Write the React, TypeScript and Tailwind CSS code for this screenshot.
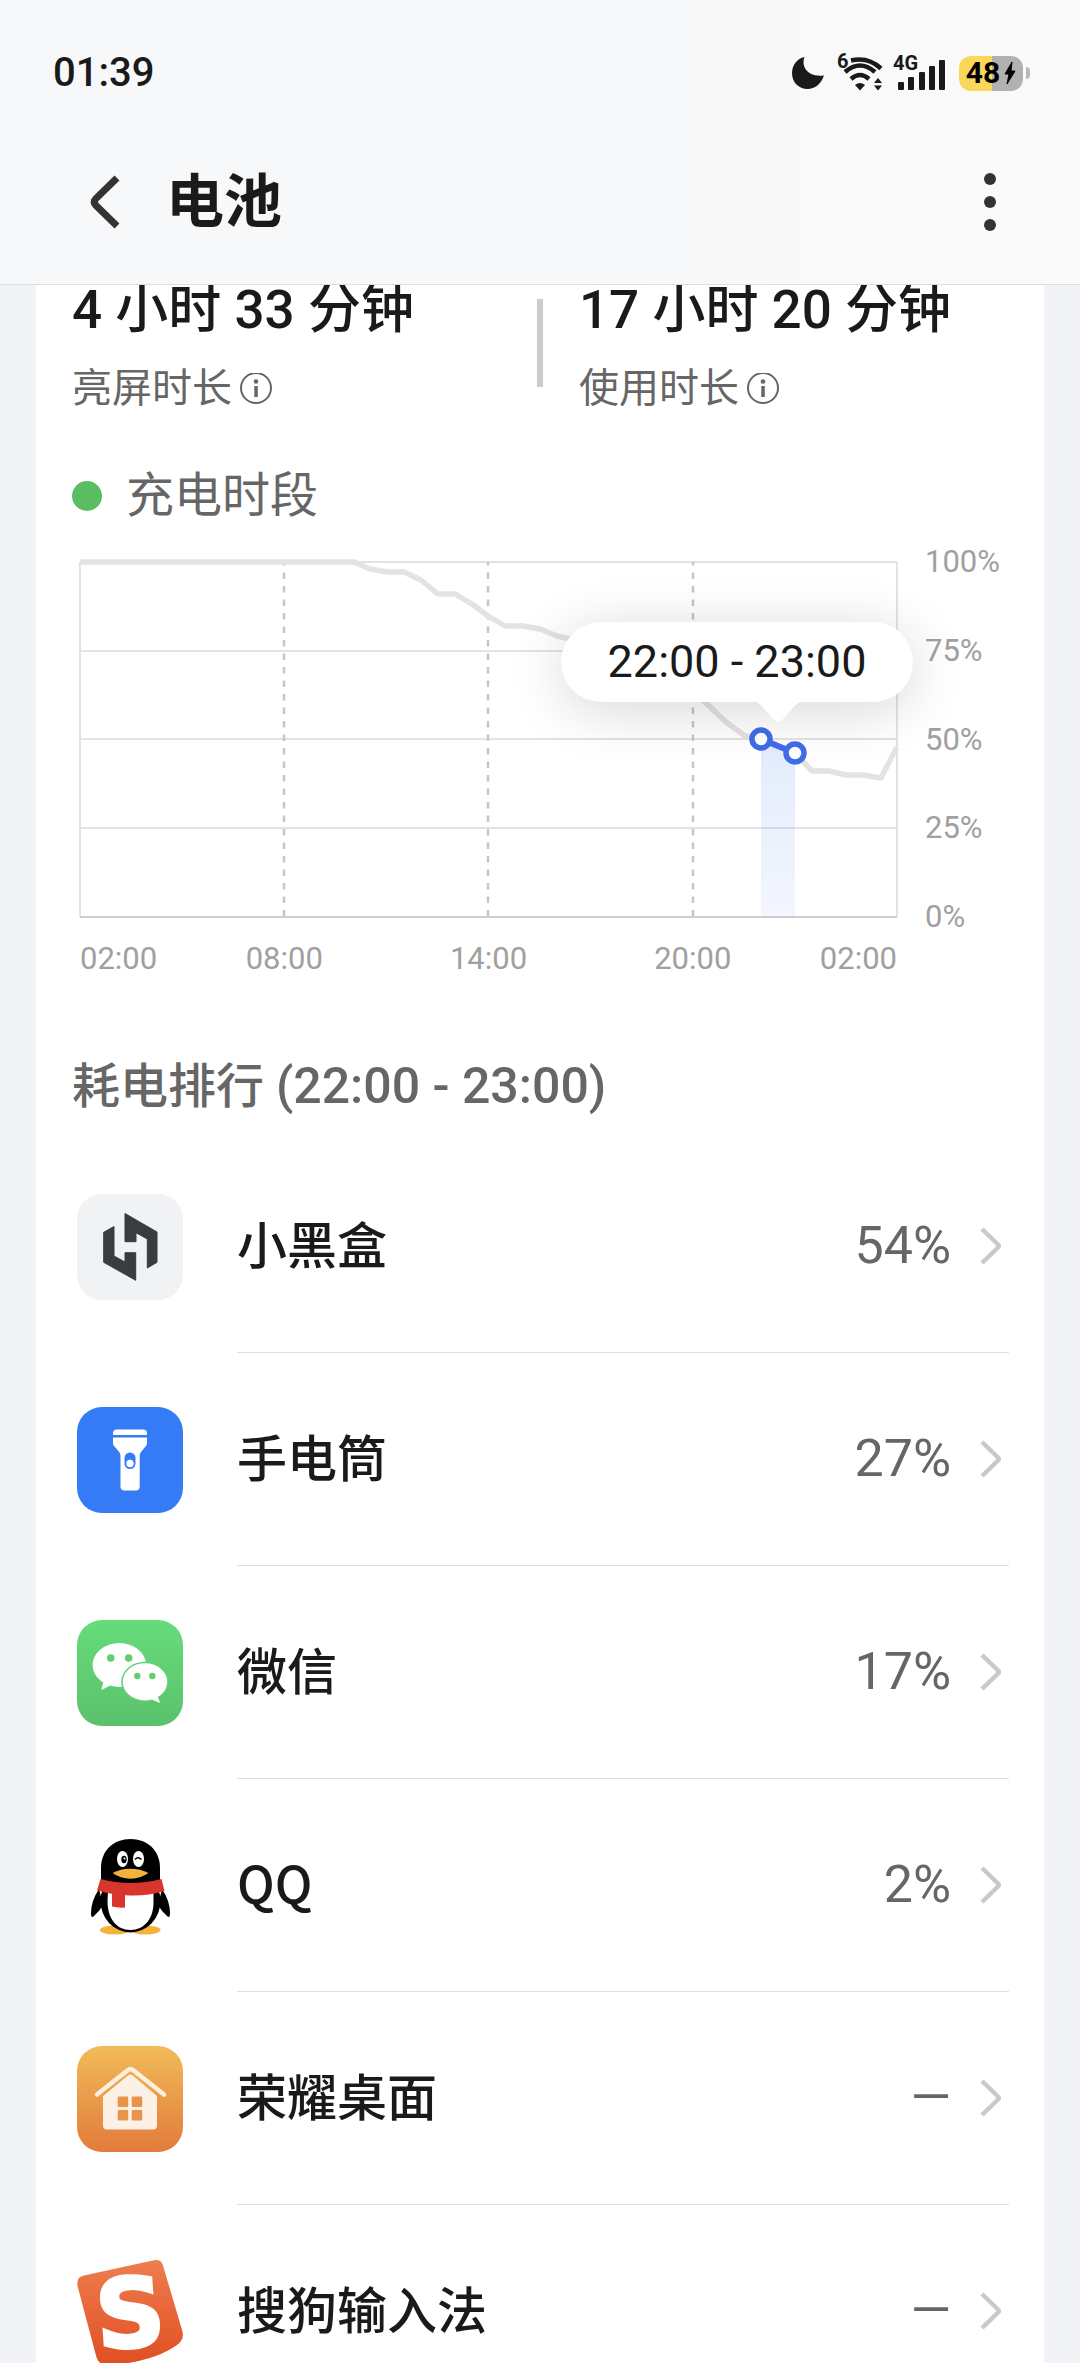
import React from "react";

const points = [
  [0, 0], [274, 0], [290, 7], [307, 10], [324, 10], [341, 18], [358, 32], [375, 32],
  [392, 42], [408, 54], [425, 64], [443, 64], [460, 67], [477, 74], [494, 78], [511, 84],
  [545, 98], [590, 120], [610, 128], [625, 140], [646, 160], [665, 174], [681, 177],
  [715, 191], [732, 209], [749, 209], [766, 213], [783, 213], [801, 216], [817, 185],
];

const linePath = points.map((p) => p.join(",")).join(" ");

function HeyboxIcon() {
  return (
    <svg viewBox="0 0 106 106" className="w-full h-full" aria-hidden="true">
      <rect width="106" height="106" rx="25" fill="#f1f2f4" />
      <g fill="#3a3c40" stroke="#3a3c40" strokeWidth="1" strokeLinejoin="round">
        <path d="M48 19.5 80 38v30.3l-9.700 5.700V45L59 38.700v9H48z" />
        <path d="M37 32.500 26.700 38.300v30l32 18V58.700H48V68l-11-6z" />
      </g>
    </svg>
  );
}

function TorchIcon() {
  return (
    <svg viewBox="0 0 106 106" className="w-full h-full" aria-hidden="true">
      <rect width="106" height="106" rx="25" fill="#357bf6" />
      <path d="M36 28v-1.500a4 4 0 0 1 4-4h26a4 4 0 0 1 4 4V28z" fill="#fff" />
      <path
        d="M36 30.500h34V36q0 2-1.500 3.500L64 45q-1.300 1.500-1.300 3.500V79.500a4 4 0 0 1-4 4H47.500a4 4 0 0 1-4-4V48.500q0-2-1.300-3.500L37.500 39.500Q36 38 36 36z"
        fill="#fff"
      />
      <rect x="47.500" y="45.500" width="11" height="16.500" rx="5.500" fill="#357bf6" />
      <circle cx="53" cy="56.500" r="3.700" fill="#fff" />
    </svg>
  );
}

function WechatIcon() {
  return (
    <svg viewBox="0 0 106 106" className="w-full h-full" aria-hidden="true">
      <defs>
        <linearGradient id="wechat" x1="0" y1="0" x2="0" y2="1">
          <stop offset="0" stopColor="#66dc7a" />
          <stop offset="1" stopColor="#5bc16c" />
        </linearGradient>
      </defs>
      <rect width="106" height="106" rx="25" fill="url(#wechat)" />
      <ellipse cx="42.300" cy="45" rx="26.700" ry="22" fill="#fff" />
      <path d="M27 60 24.500 69q0 1 1.200.6L34 65z" fill="#fff" />
      <ellipse cx="68" cy="61.800" rx="23.800" ry="20" fill="#60cf73" />
      <ellipse cx="68" cy="61.800" rx="22.300" ry="18.600" fill="#fff" />
      <path d="m80 75 2.800 6.800q0 1.200-1.200.7L74 79z" fill="#fff" />
      <g fill="#60cf73">
        <circle cx="33.700" cy="38" r="3.800" />
        <circle cx="51.700" cy="38" r="3.800" />
        <circle cx="60.300" cy="56" r="3.200" />
        <circle cx="75.300" cy="56" r="3.200" />
      </g>
    </svg>
  );
}

function QQIcon() {
  return (
    <svg viewBox="0 0 106 106" className="w-full h-full" aria-hidden="true">
      <ellipse cx="38" cy="97" rx="15" ry="4.500" fill="#f3b33b" />
      <ellipse cx="68.500" cy="97" rx="15" ry="4.500" fill="#f3b33b" />
      <path
        d="M22 56Q14 68 14 80q0 6 3 3 5-4 9-11zM85 56q8 12 8 24 0 6-3 3-5-4-9-11z"
        fill="#000"
      />
      <ellipse cx="53.500" cy="68" rx="30" ry="31.500" fill="#000" />
      <path d="M24 50V35C24 17 37 6 53.500 6S83 17 83 35v15z" fill="#000" />
      <path d="M31 58h45.500v10C77 86 67 97 53.500 97S30.500 86 30.500 68z" fill="#fff" />
      <path d="M23.500 46q30 8 61 0l3 12q-17 5-34 4.500Q36 62 20 57.500z" fill="#d9352c" />
      <path d="M35 58h13v16.500q-7 .5-13-1z" fill="#d9352c" />
      <ellipse cx="45.500" cy="26" rx="5.500" ry="8" fill="#fff" />
      <ellipse cx="61.500" cy="26" rx="5.500" ry="8" fill="#fff" />
      <ellipse cx="47" cy="26.500" rx="2.700" ry="3.700" fill="#000" />
      <circle cx="47.500" cy="25.500" r="1" fill="#fff" />
      <path d="M58 26.500q3-3.500 6.500 0" fill="none" stroke="#000" strokeWidth="1.500" />
      <path d="M35.500 40q8-4.300 18-4.300t18 4.300q-8 5.700-18 5.700t-18-5.700z" fill="#f3b33b" />
    </svg>
  );
}

function HomeIcon() {
  return (
    <svg viewBox="0 0 106 106" className="w-full h-full" aria-hidden="true">
      <defs>
        <linearGradient id="home" x1="0" y1="0" x2="0" y2="1">
          <stop offset="0" stopColor="#f1bb58" />
          <stop offset="1" stopColor="#e27b3b" />
        </linearGradient>
      </defs>
      <rect width="106" height="106" rx="25" fill="url(#home)" />
      <path
        d="M20 48.500 51 24q2.500-2 5 0l31 24.500"
        fill="none"
        stroke="#fdeedd"
        strokeWidth="4.500"
        strokeLinecap="round"
      />
      <path
        d="M26 50 51 29.500q2.400-1.800 4.800 0L80 50v29.500a4 4 0 0 1-4 4H30a4 4 0 0 1-4-4z"
        fill="#fdf0e6"
      />
      <g fill="#e99549">
        <rect x="40.700" y="50.500" width="10.500" height="10.500" rx="1" />
        <rect x="54.700" y="50.500" width="10.500" height="10.500" rx="1" />
        <rect x="40.700" y="64" width="10.500" height="10.500" rx="1" />
        <rect x="54.700" y="64" width="10.500" height="10.500" rx="1" />
      </g>
    </svg>
  );
}

function SogouIcon() {
  return (
    <svg viewBox="0 0 106 106" className="w-full h-full overflow-visible" aria-hidden="true">
      <defs>
        <linearGradient id="sogou" x1="0" y1="0" x2="0" y2="1">
          <stop offset="0" stopColor="#ee7d50" />
          <stop offset="1" stopColor="#e04f22" />
        </linearGradient>
      </defs>
      <path
        d="M.5 27Q-1 18 7 16.500L77 1.300q7-1.300 9 5.200l19.500 66q2 8-5.500 13.500Q76 103 33 106q-11 .5-13.500-7.500z"
        fill="url(#sogou)"
      />
      <text
        x="53"
        y="88"
        textAnchor="middle"
        transform="rotate(-4 53 53)"
        fill="#fff"
        stroke="#fff"
        strokeWidth="3"
        className="font-['DejaVu_Sans'] font-bold text-[96px]"
      >
        S
      </text>
    </svg>
  );
}

const apps = [
  { name: "小黑盒", usage: "54%", icon: <HeyboxIcon /> },
  { name: "手电筒", usage: "27%", icon: <TorchIcon /> },
  { name: "微信", usage: "17%", icon: <WechatIcon /> },
  { name: "QQ", usage: "2%", icon: <QQIcon /> },
  { name: "荣耀桌面", usage: "—", icon: <HomeIcon /> },
  { name: "搜狗输入法", usage: "—", icon: <SogouIcon /> },
];

function StatusBar() {
  return (
    <div className="flex items-center justify-between h-[146px] pl-[53px] pr-[50px]">
      <span className="text-[40px] leading-[48px] font-medium">01:39</span>
      <div className="flex items-center">
        <svg width="34" height="34" viewBox="0 0 34 34" aria-hidden="true">
          <path d="M13.500 1C10 10 16 21.500 33 19.500 30 28 24 33 16.500 33 7.500 33 1 26 1 17.500 1 9 6 2.500 13.500 1z" fill="#1a1a1a" />
        </svg>
        <svg width="48" height="38" viewBox="0 0 48 38" className="ml-3 overflow-visible" aria-hidden="true">
          <text x="0" y="14" className="text-[20px] font-bold" fill="#1a1a1a">6</text>
          <g fill="none" stroke="#1a1a1a" strokeWidth="4.500">
            <path d="M14 6.500q17-4 30 8" />
            <path d="M8 18q15-13 30 0" />
            <path d="M14 25q9-8 18 0" />
          </g>
          <path d="M18 31q5-4 10 0l-5 5.500z" fill="#1a1a1a" />
          <path d="m37 29 4-5 4 5zM37 31.500l4 5 4-5z" fill="#1a1a1a" />
        </svg>
        <svg width="54" height="38" viewBox="0 0 54 38" className="ml-2 overflow-visible" aria-hidden="true">
          <text x="0" y="16" className="text-[20px] font-bold" fill="#1a1a1a">4G</text>
          <g fill="#1a1a1a">
            <rect x="5" y="28" width="6" height="8" rx="1" />
            <rect x="15" y="23" width="6" height="13" rx="1" />
            <rect x="26" y="18" width="6" height="18" rx="1" />
            <rect x="36" y="12" width="6" height="24" rx="1" />
            <rect x="46" y="6" width="6" height="30" rx="1" />
          </g>
        </svg>
        <div className="flex items-center ml-3">
          <div className="flex items-center justify-center gap-1 w-16 h-[35px] rounded-[12px] bg-linear-to-r from-[#f9d65c] from-51% to-[#b1b1b1] to-51% text-black">
            <span className="text-[30px] leading-none font-bold">48</span>
            <svg width="12" height="24" viewBox="0 0 12 24" aria-hidden="true">
              <path d="M8 1 1 13h4L3 23l8-13H7z" fill="#000" stroke="#000" strokeLinejoin="round" />
            </svg>
          </div>
          <div className="w-1 h-3 ml-[3px] rounded-r-full bg-[#b9b9b9]"></div>
        </div>
      </div>
    </div>
  );
}

function Header() {
  return (
    <header className="relative z-10 shrink-0 h-[285px] border-b border-[#dcdde0] bg-linear-to-r from-[#f7f8fa] via-[#f7f8f9] to-[#fafafb]">
      <StatusBar />
      <div className="flex items-center h-28 pl-[88px] pr-20">
        <button type="button" aria-label="返回">
          <svg width="34" height="56" viewBox="0 0 34 56" fill="none" aria-hidden="true">
            <path d="M29 4 8 24.500q-3.500 3.500 0 7L29 52" stroke="#333" strokeWidth="7" />
          </svg>
        </button>
        <h1 className="flex-1 ml-11 text-[58px] leading-[72px] font-bold">电池</h1>
        <button type="button" aria-label="更多" className="flex flex-col gap-[11px] px-1">
          <span className="w-3 h-3 rounded-full bg-[#333]"></span>
          <span className="w-3 h-3 rounded-full bg-[#333]"></span>
          <span className="w-3 h-3 rounded-full bg-[#333]"></span>
        </button>
      </div>
    </header>
  );
}

function Stat({ value, label }: any) {
  return (
    <div>
      <p className="text-[53px] leading-[66px] font-medium whitespace-nowrap">{value}</p>
      <p className="flex items-center gap-2 mt-[22px] text-[40px] leading-[48px] text-[#666]">
        {label}
        <svg width="32" height="32" viewBox="0 0 32 32" aria-hidden="true">
          <circle cx="16" cy="15" r="15" fill="none" stroke="#666" strokeWidth="2" className="overflow-visible" />
          <circle cx="16" cy="8.500" r="2.300" fill="#666" />
          <rect x="14.300" y="13" width="3.500" height="11" fill="#666" />
        </svg>
      </p>
    </div>
  );
}

function Chart() {
  return (
    <div className="grid grid-cols-[1fr_119px] gap-x-7 mt-[38px] pl-11 text-[31px] leading-9 text-[#a0a0a0]">
      <div className="relative">
        <svg viewBox="0 0 817 355" className="block w-full h-auto overflow-visible" fill="none" aria-hidden="true">
          <defs>
            <linearGradient id="range" x1="0" y1="0" x2="0" y2="1">
              <stop offset="0" stopColor="#3f7de8" stopOpacity="0.150" />
              <stop offset="1" stopColor="#3f6de8" stopOpacity="0.060" />
            </linearGradient>
          </defs>
          <g stroke="#e3e3e3" strokeWidth="2">
            <path d="M0 0V355M817 0V355" />
            <path d="M0 0H817M0 89H817M0 177H817M0 266H817" />
          </g>
          <path d="M0 355H817" stroke="#cfcfcf" strokeWidth="2" />
          <path
            d="M204 0V355M408 0V355M613 0V355"
            stroke="#c6c6c6"
            strokeWidth="2.500"
            strokeDasharray="6.500 7"
            strokeDashoffset="3"
          />
          <polyline points={linePath} stroke="#e3e3e3" strokeWidth="5.500" strokeLinejoin="round" />
          <path d="M681 177 715 191V355H681z" fill="url(#range)" />
          <path d="M681 177 715 191" stroke="#3f6de8" strokeWidth="6" />
          <circle cx="681" cy="177" r="9" fill="#fff" stroke="#3f6de8" strokeWidth="5.500" />
          <circle cx="715" cy="191" r="9" fill="#fff" stroke="#3f6de8" strokeWidth="5.500" />
        </svg>
        <div className="absolute -right-4 top-[60px] flex items-center justify-center w-[352px] h-20 rounded-full bg-white text-[45px] text-[#1a1a1a] shadow-[0_8px_56px_rgba(0,0,0,0.16)]">
          22:00 - 23:00
          <svg width="52" height="22" viewBox="0 0 52 22" className="absolute right-[109px] top-full -mt-px" aria-hidden="true">
            <path d="M0 0q5 .5 9 4.500L22 19q4 4 8 0L43 4.500Q47 .5 52 0z" fill="#fff" />
          </svg>
        </div>
      </div>
      <div className="flex flex-col justify-between -my-[18px]">
        <span>100%</span>
        <span>75%</span>
        <span>50%</span>
        <span>25%</span>
        <span>0%</span>
      </div>
      <div className="grid grid-cols-8 mt-6 text-center">
        <span className="text-left">02:00</span>
        <span className="col-span-2">08:00</span>
        <span className="col-span-2">14:00</span>
        <span className="col-span-2">20:00</span>
        <span className="text-right">02:00</span>
      </div>
    </div>
  );
}

export default function App() {
  return (
    <div className="flex flex-col h-screen overflow-hidden bg-[#f1f3f7] text-[#1a1a1a] font-[Roboto,'Noto_Sans_CJK_SC',sans-serif]">
      <Header />
      <main className="flex-1 mx-9 -mt-2 bg-white">
        <section className="grid grid-cols-[1fr_6px_1fr] px-9">
          <Stat value="4 小时 33 分钟" label="亮屏时长" />
          <div className="h-[88px] mt-[22px] bg-[#ccc]"></div>
          <div className="pl-9">
            <Stat value="17 小时 20 分钟" label="使用时长" />
          </div>
        </section>

        <div className="flex items-center gap-6 mt-[55px] px-9 text-[48px] leading-[56px] text-[#666]">
          <span className="w-[30px] h-[30px] rounded-full bg-[#5bbd62]"></span>
          充电时段
        </div>

        <Chart />

        <h2 className="mt-[77px] px-9 text-[48px] leading-[64px] font-medium text-[#666]">
          耗电排行 <span className="text-[50px]">(22:00 - 23:00)</span>
        </h2>

        <ul className="mt-[21px] pl-[41px] pr-[35px]">
          {apps.map((app) => (
            <li key={app.name}>
              <a href="#" className="flex items-center h-[213px]">
                <span className="w-[106px] h-[106px] shrink-0">{app.icon}</span>
                <span className="flex flex-1 items-center h-full ml-[54px] pr-2 border-b border-[#dedede]">
                  <span className="flex-1 mb-2 text-[50px] leading-[60px] font-medium font-['Noto_Sans_CJK_SC',sans-serif]">
                    {app.name}
                  </span>
                  <span className="text-[52px] leading-[60px] text-[#666]">{app.usage}</span>
                  <svg width="22" height="40" viewBox="0 0 22 40" fill="none" className="ml-7" aria-hidden="true">
                    <path d="M3 3 19 18.500q1.500 1.500 0 3L3 37" stroke="#c9c9c9" strokeWidth="4.500" />
                  </svg>
                </span>
              </a>
            </li>
          ))}
        </ul>
      </main>
    </div>
  );
}
